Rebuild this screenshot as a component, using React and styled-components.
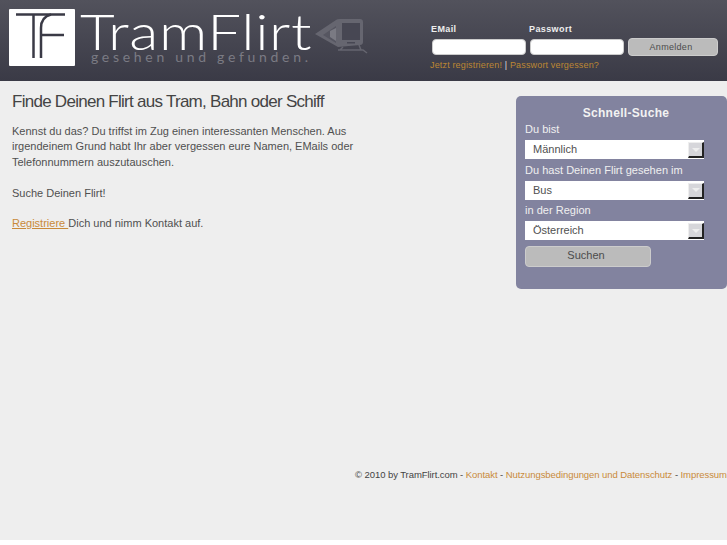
import React from 'react'
import styled, { createGlobalStyle } from 'styled-components'

const GlobalStyle = createGlobalStyle`
  html, body {
    margin: 0;
    padding: 0;
    background: #fff;
    overflow: hidden;
  }
  body {
    font-family: "Liberation Sans", Arial, sans-serif;
  }
`

const Page = styled.div`
  width: 727px;
  height: 540px;
  background: #eee;
  display: flex;
  flex-direction: column;
  overflow: hidden;
`

const Header = styled.header`
  height: 81px;
  flex: none;
  display: flex;
  justify-content: space-between;
  background: linear-gradient(#52525c, #3a3a46);
`

const Brand = styled.div`
  display: flex;
  align-items: flex-start;
  padding: 9px 0 0 9px;
`

const Wordmark = styled.div`
  width: 231px;
  margin-left: 5px;
`

const BrandName = styled.div`
  font-family: Lato, sans-serif;
  font-weight: 300;
  font-size: 49px;
  line-height: 44px;
  letter-spacing: 0.5px;
  color: #fff;
  white-space: nowrap;
  transform: scaleX(1.225);
  transform-origin: left center;
`

const Slogan = styled.div`
  font-family: Lato, sans-serif;
  font-weight: 400;
  font-size: 14px;
  line-height: 12px;
  letter-spacing: 3.7px;
  color: #7b7b84;
  margin: -2px 0 0 11px;
  white-space: nowrap;
`

const TrainIcon = styled.svg`
  margin: 8px 0 0 3px;
  flex: none;
`

const Login = styled.form`
  width: 296px;
  padding-top: 24px;
`

const LoginRow = styled.div`
  display: flex;
`

const LoginLabel = styled.label`
  width: 98px;
  font-size: 9px;
  line-height: 11px;
  font-weight: bold;
  letter-spacing: 0.4px;
  color: #eee;
`

const LoginFields = styled.div`
  display: flex;
  gap: 4px;
  margin: 3px 0 0 1px;
  align-items: center;
`

const LoginInput = styled.input`
  box-sizing: border-box;
  width: 94px;
  height: 16px;
  padding: 0 4px;
  background: #fff;
  border: 1px solid #ccc;
  border-radius: 4px;
  outline: none;
`

const Button = styled.button`
  box-sizing: border-box;
  width: ${p => p.$width}px;
  height: ${p => p.$height}px;
  padding: 0 4px 0 0;
  background: #bbb;
  border: 1px solid #ccc;
  border-radius: 4px;
  color: #4c4c4c;
  font-family: inherit;
  font-size: ${p => p.$size}px;
  letter-spacing: ${p => p.$spacing}px;
`

const LoginLinks = styled.div`
  margin: 3px 0 0 -1px;
  font-size: 9px;
  line-height: 12px;
  letter-spacing: 0.16px;
  color: #ddd;
`

const OrangeLink = styled.a`
  color: ${p => p.$color || '#bd8733'};
  text-decoration: ${p => (p.$underline ? 'underline' : 'none')};
`

const Main = styled.main`
  flex: 1;
  display: flex;
  justify-content: space-between;
  align-items: flex-start;
`

const Content = styled.section`
  width: 350px;
  padding: 10px 0 0 12px;
  color: #505050;
`

const Title = styled.h1`
  margin: 0 0 12px;
  font-size: 17px;
  line-height: 21px;
  font-weight: normal;
  letter-spacing: -0.73px;
  color: #444;
  white-space: nowrap;
`

const Text = styled.p`
  margin: 0 0 15.4px;
  font-size: 11px;
  line-height: 15.4px;
  white-space: nowrap;
`

const Search = styled.form`
  box-sizing: border-box;
  width: 211px;
  height: 193px;
  margin-top: 15px;
  padding: 9px 23px 0 9px;
  background: #82839f;
  border-radius: 5px;
`

const SearchTitle = styled.h2`
  margin: 0 0 1px;
  font-size: 12px;
  line-height: 16px;
  font-weight: bold;
  letter-spacing: 0.3px;
  color: #f2f2f2;
  text-align: center;
  padding-left: 23px;
`

const SearchLabel = styled.label`
  display: block;
  height: 15px;
  font-size: 11px;
  line-height: 14px;
  letter-spacing: 0.02px;
  color: #f0f0f0;
  white-space: nowrap;
`

const Select = styled.div`
  box-sizing: border-box;
  width: 179px;
  height: 19px;
  margin: 3px 0 3.5px;
  padding: 0 0 1px 8px;
  display: flex;
  justify-content: space-between;
  align-items: center;
  background: #fff;
  font-size: 11px;
  color: #505050;
`

const SelectArrow = styled.span`
  box-sizing: border-box;
  width: 16px;
  height: 16px;
  margin-top: 2px;
  display: flex;
  align-items: center;
  justify-content: center;
  background: #d6d6da;
  border-right: 2px solid #222;
  border-bottom: 2px solid #222;
  border-top: 1px solid #eee;
  border-left: 1px solid #eee;

  &::after {
    content: '';
    border-left: 4px solid transparent;
    border-right: 4px solid transparent;
    border-top: 4px solid #eee;
  }
`

const SearchButton = styled(Button)`
  display: block;
  margin-top: 6px;
  padding-bottom: 3px;
`

const Footer = styled.footer`
  flex: none;
  padding: 0 0 59px 355px;
  font-size: 9.5px;
  line-height: 12px;
  letter-spacing: -0.07px;
  color: #444;
  white-space: nowrap;
`

function Logo() {
  return (
    <svg width="66" height="57" viewBox="0 0 66 57" style={{ flex: 'none' }}>
      <rect width="66" height="57" rx="1" fill="#fff" />
      <g fill="none" stroke="#3a3a46" strokeWidth="2.5">
        <path d="M7 5.5 H56" />
        <path d="M24.5 5.5 V49" />
        <path d="M32 49 V19 Q32 8 42 5.5" />
        <path d="M33 26 H55" />
      </g>
    </svg>
  )
}

function Train() {
  return (
    <TrainIcon width="54" height="38" viewBox="0 0 54 38">
      <path d="M1 17 L22 3 Q23 2 26 2 H46 Q49 2 49 5 V25 Q49 28 46 28 L24 30 Z" fill="#666670" />
      <path d="M28 6 H46 V23 H28 Z" fill="#474753" />
      <path d="M9 18 L22 9 V26 Z" fill="#565661" />
      <path d="M16 14 L22 11 V24 L16 20 Z" fill="#7a7a83" />
      <path d="M33 25 H41 V26.5 H33 Z" fill="#474753" />
      <path d="M24 33 H49 L53 36 M29 30 L26 33 M45 28 L47 33" fill="none" stroke="#666670" strokeWidth="1.5" />
    </TrainIcon>
  )
}

function SelectBox({ value }) {
  return (
    <Select>
      {value}
      <SelectArrow />
    </Select>
  )
}

export default function App() {
  return (
    <Page>
      <GlobalStyle />
      <Header>
        <Brand>
          <Logo />
          <Wordmark>
            <BrandName>TramFlirt</BrandName>
            <Slogan>gesehen und gefunden.</Slogan>
          </Wordmark>
          <Train />
        </Brand>
        <Login>
          <LoginRow>
            <LoginLabel>EMail</LoginLabel>
            <LoginLabel>Passwort</LoginLabel>
          </LoginRow>
          <LoginFields>
            <LoginInput />
            <LoginInput />
            <Button type="button" $width={90} $height={18} $size={9} $spacing={0.3}>Anmelden</Button>
          </LoginFields>
          <LoginLinks>
            <OrangeLink>Jetzt registrieren!</OrangeLink> | <OrangeLink>Passwort vergessen?</OrangeLink>
          </LoginLinks>
        </Login>
      </Header>
      <Main>
        <Content>
          <Title>Finde Deinen Flirt aus Tram, Bahn oder Schiff</Title>
          <Text>
            Kennst du das? Du triffst im Zug einen interessanten Menschen. Aus<br />
            irgendeinem Grund habt Ihr aber vergessen eure Namen, EMails oder<br />
            Telefonnummern auszutauschen.
          </Text>
          <Text>Suche Deinen Flirt!</Text>
          <Text>
            <OrangeLink $color="#c98a3a" $underline>Registriere </OrangeLink>
            Dich und nimm Kontakt auf.
          </Text>
        </Content>
        <Search>
          <SearchTitle>Schnell-Suche</SearchTitle>
          <SearchLabel>Du bist</SearchLabel>
          <SelectBox value="Männlich" />
          <SearchLabel>Du hast Deinen Flirt gesehen im</SearchLabel>
          <SelectBox value="Bus" />
          <SearchLabel>in der Region</SearchLabel>
          <SelectBox value="Österreich" />
          <SearchButton type="button" $width={126} $height={21} $size={11} $spacing={0}>Suchen</SearchButton>
        </Search>
      </Main>
      <Footer>
        © 2010 by TramFlirt.com - <OrangeLink $color="#c98a3a">Kontakt</OrangeLink> - <OrangeLink $color="#c98a3a">Nutzungsbedingungen und Datenschutz</OrangeLink> - <OrangeLink $color="#c98a3a">Impressum</OrangeLink>
      </Footer>
    </Page>
  )
}
